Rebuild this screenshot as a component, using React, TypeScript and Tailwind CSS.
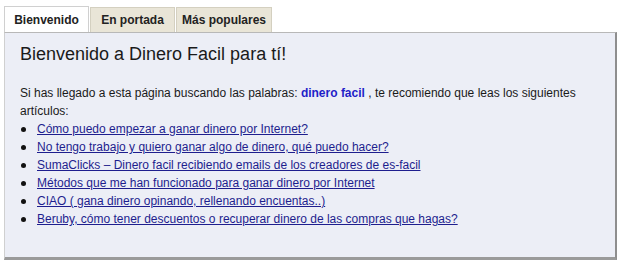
import React from "react";

const links = [
  "Cómo puedo empezar a ganar dinero por Internet?",
  "No tengo trabajo y quiero ganar algo de dinero, qué puedo hacer?",
  "SumaClicks – Dinero facil recibiendo emails de los creadores de es-facil",
  "Métodos que me han funcionado para ganar dinero por Internet",
  "CIAO ( gana dinero opinando, rellenando encuentas..)",
  "Beruby, cómo tener descuentos o recuperar dinero de las compras que hagas?",
];

export default function App() {
  return (
    <div className="w-[629px] h-[273px] bg-white pt-[7px] pl-[4px] font-['Liberation_Sans',Arial,sans-serif]">
      <div className="flex items-end h-[25px] text-[12px] font-bold text-[#222]">
        <div className="h-[26px] w-[85px] relative z-10 bg-white border border-[#d0d0d0] border-b-0 flex items-center justify-center">
          Bienvenido
        </div>
        <div className="h-[25px] w-[85px] ml-[1px] bg-[#e9e5d7] border border-[#d4d0c0] border-b-0 flex items-center justify-center">
          En portada
        </div>
        <div className="h-[25px] w-[96px] ml-[1px] bg-[#e9e5d7] border border-[#d4d0c0] border-b-0 flex items-center justify-center">
          Más populares
        </div>
      </div>
      <div className="w-[613px] h-[228px] bg-[#eceef6] border-t border-t-[#b8b8b8] border-l border-l-[#d0d0d0] border-r-2 border-r-[#8e8e8e] border-b-[3px] border-b-[#9a9a9a] pl-[15px] pt-[10px]">
        <h1 className="text-[18px] leading-[22px] text-[#1a1a1a] font-normal">
          Bienvenido a Dinero Facil para tí!
        </h1>
        <div className="mt-[19px] text-[12px] leading-[18px] text-[#1a1a1a] pr-[30px]">
          <p>
            Si has llegado a esta página buscando las palabras:{" "}
            <b className="text-[#1f1fc8]">dinero facil</b> , te recomiendo que leas los siguientes artículos:
          </p>
          <ul>
            {links.map((l) => (
              <li key={l} className="flex items-center">
                <span className="w-[5px] h-[5px] rounded-full bg-[#111] ml-[1px] mr-[11px]"></span>
                <a className="text-[#1e1e8e] underline">{l}</a>
              </li>
            ))}
          </ul>
        </div>
      </div>
    </div>
  );
}
